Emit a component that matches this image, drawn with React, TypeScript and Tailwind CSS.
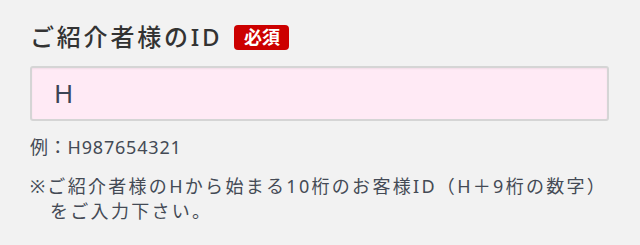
export default function App() {
  return (
    <div className="min-h-[245px] w-[640px] bg-[#f2f2f2] px-[30px] pt-[20px] font-['Noto_Sans','Noto_Sans_CJK_JP',sans-serif] text-[#3d4450]">
      <div className="flex h-[34px] items-center">
        <h2 className="text-[24px] font-medium leading-none tracking-[2.8px] text-[#333333]">ご紹介者様のID</h2>
        <span className="ml-[12px] flex h-[25px] w-[55px] items-center justify-center rounded-[4px] bg-[#cc0000] text-[18px] font-bold leading-none text-white">
          必須
        </span>
      </div>
      <div className="mt-[12px] flex h-[55px] w-[579px] items-center rounded-[3px] border-2 border-[#d5d5d5] bg-[#ffeaf5] pl-[22px] text-[26px] text-[#3b4455] shadow-[inset_0_1px_2px_rgba(0,0,0,0.06)]">
        H
      </div>
      <p className="mt-[14px] text-[18px] leading-[25px] tracking-[0.8px] text-[#444a55]">例：H987654321</p>
      <p className="mt-[14px] pl-[20px] -indent-[20px] text-[18px] leading-[25px] tracking-[2.3px] text-[#444a55]">
        ※ご紹介者様のHから始まる10桁のお客様ID（H＋9桁の数字）
        <br />
        をご入力下さい。
      </p>
    </div>
  )
}
